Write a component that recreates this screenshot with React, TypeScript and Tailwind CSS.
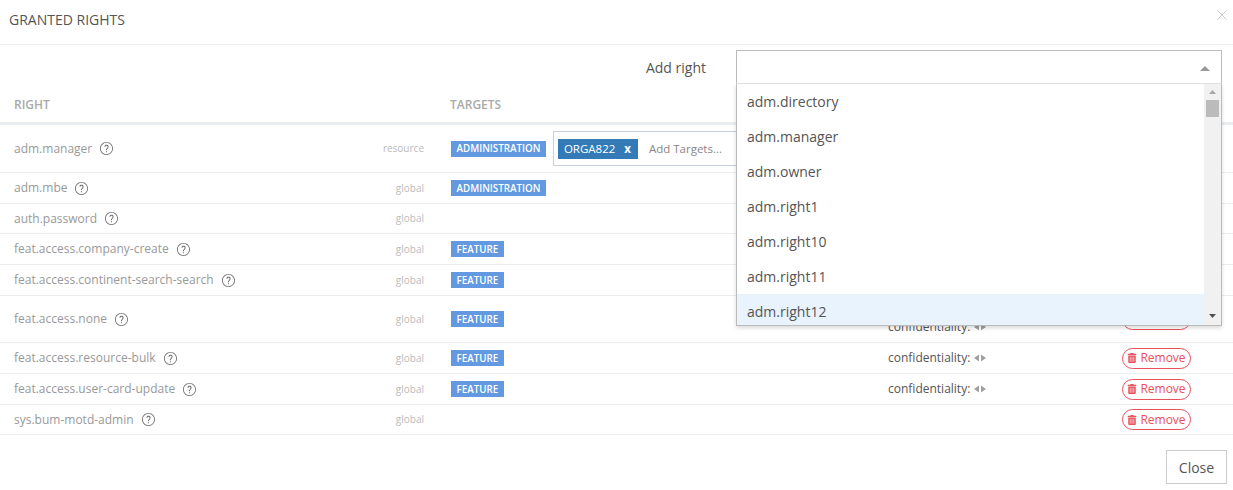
import React from 'react';
import { FaTrashAlt } from 'react-icons/fa';
import { SlQuestion } from 'react-icons/sl';

// Rows of the rights table
type Row = {
  name: string;
  scope: string;
  badge?: string;
  height: string;
  conf?: boolean;
  targets?: boolean;
  tall?: boolean;
};

const rows: Row[] = [
  { name: 'adm.manager', scope: 'resource', badge: 'ADMINISTRATION', height: 'h-[48px]', targets: true },
  { name: 'adm.mbe', scope: 'global', badge: 'ADMINISTRATION', height: 'h-[31px]' },
  { name: 'auth.password', scope: 'global', height: 'h-[30px]' },
  { name: 'feat.access.company-create', scope: 'global', badge: 'FEATURE', height: 'h-[31px]' },
  { name: 'feat.access.continent-search-search', scope: 'global', badge: 'FEATURE', height: 'h-[31px]' },
  { name: 'feat.access.none', scope: 'global', badge: 'FEATURE', height: 'h-[47px]', conf: true, tall: true },
  { name: 'feat.access.resource-bulk', scope: 'global', badge: 'FEATURE', height: 'h-[31px]', conf: true },
  { name: 'feat.access.user-card-update', scope: 'global', badge: 'FEATURE', height: 'h-[31px]', conf: true },
  { name: 'sys.bum-motd-admin', scope: 'global', height: 'h-[30px]' },
];

const options = ['adm.directory', 'adm.manager', 'adm.owner', 'adm.right1', 'adm.right10', 'adm.right11', 'adm.right12'];

const Arrows = () => (
  <svg width="12" height="8" viewBox="0 0 12 8" className="ml-1 shrink-0">
    <path d="M5 0.5V7.5L0 4Z" fill="#a0a0a0" />
    <path d="M7 0.5V7.5L12 4Z" fill="#a0a0a0" />
  </svg>
);

export default function App() {
  return (
    <div className="relative h-[490px] w-[1233px] overflow-hidden bg-white font-['Open_Sans',sans-serif] text-[#555]">
      {/* Header */}
      <div className="flex h-[45px] items-start justify-between border-b border-[#eceeef] pl-[9px] pr-[6px]">
        <h4 className="mt-[11px] text-[14px] leading-[18px] text-[#555]">GRANTED RIGHTS</h4>
        <svg width="10" height="10" viewBox="0 0 10 10" className="mt-[10px]">
          <path d="M0.5 0.5L9.5 9.5M9.5 0.5L0.5 9.5" stroke="#ccc" strokeWidth="1" />
        </svg>
      </div>

      {/* Add right */}
      <div className="flex h-[44px] items-start justify-end pr-[11px] pt-[5px]">
        <span className="mr-[30px] text-[14px] leading-[36px]">Add right</span>
        <div className="relative h-[34px] w-[486px] rounded-t-[1px] border border-[#bbb] border-b-[#e5e5e5] bg-white">
          <svg width="10" height="5" viewBox="0 0 10 5" className="absolute right-[11px] top-[15px]">
            <path d="M5 0L10 5H0Z" fill="#999" />
          </svg>
          {/* Open dropdown */}
          <div className="absolute left-[-1px] top-[33px] z-10 flex h-[242px] w-[486px] border border-t-0 border-[#bbb] bg-white shadow-[0_2px_4px_rgba(0,0,0,0.15)]">
            <ul className="flex-1 overflow-hidden">
              {options.map((o, i) => (
                <li
                  key={o}
                  className={`flex h-[35px] items-center pl-[10px] text-[14px] text-[#555] ${i === 6 ? 'bg-[#e8f3fd]' : ''}`}
                >
                  {o}
                </li>
              ))}
            </ul>
            <div className="flex w-[17px] flex-col items-center bg-[#f1f1f1] pt-[6px]">
              <svg width="7" height="4" viewBox="0 0 7 4"><path d="M3.5 0L7 4H0Z" fill="#a8a8a8" /></svg>
              <div className="mt-[6px] h-[17px] w-[13px] bg-[#bbb]" />
              <svg width="7" height="4" viewBox="0 0 7 4" className="mt-auto mb-[7px]"><path d="M3.5 4L7 0H0Z" fill="#505050" /></svg>
            </div>
          </div>
        </div>
      </div>

      {/* Table head */}
      <div className="flex h-[36px] items-center border-b-[3px] border-[#e9edf0] pb-[2px] text-[12px] font-semibold text-[#aaa]">
        <div className="w-[450px] pl-[14px]">RIGHT</div>
        <div>TARGETS</div>
      </div>

      {/* Table rows */}
      {rows.map(r => (
        <div key={r.name} className={`flex items-center border-b border-[#e9edf0] ${r.height}`}>
          <div className="flex w-[377px] items-center pl-[14px] text-[12px] text-[#999]">
            <span>{r.name}</span>
            <SlQuestion className="ml-[8px] text-[13px] text-[#666]" />
          </div>
          <div className="w-[47px] text-right text-[10px] text-[#bbb]">{r.scope}</div>
          <div className="ml-[27px] flex w-[437px] items-center">
            {r.badge && (
              <span className="flex h-[16px] w-auto items-center bg-[#6299e0] px-[5.5px] pt-[2px] text-[9.8px] font-semibold text-white">{r.badge}</span>
            )}
            {r.targets && (
              <div className="ml-[7px] flex h-[35px] w-[300px] items-center border border-[#c5cfdd] pl-[4px]">
                <span className="flex h-[20px] w-[80px] items-center bg-[#337ab7] pl-[6px] text-[11.5px] font-medium text-white">
                  ORGA822
                  <span className="ml-[9px] font-bold">x</span>
                </span>
                <span className="ml-[11px] text-[11.5px] text-[#888]">Add Targets...</span>
              </div>
            )}
          </div>
          <div className="w-[234px] text-[12px] leading-[16px] text-[#555]">
            {r.conf && (
              <div className={`flex items-center ${r.tall ? 'mt-[15px]' : ''}`}>
                confidentiality:
                <Arrows />
              </div>
            )}
          </div>
          <button className="flex h-[21px] w-[69px] items-center justify-center rounded-full border border-[#e8505b] text-[12px] text-[#e8505b]">
            <FaTrashAlt className="mr-[3px] text-[10px]" />
            Remove
          </button>
        </div>
      ))}

      {/* Footer */}
      <div className="flex justify-end pr-[6px] pt-[15px]">
        <button className="h-[34px] w-[61px] border border-[#ccc] text-[14px] text-[#555]">Close</button>
      </div>
    </div>
  );
}
